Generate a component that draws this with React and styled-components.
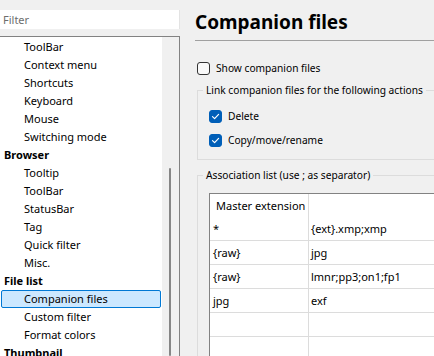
import React from "react";
import styled, { createGlobalStyle } from "styled-components";

const Global = createGlobalStyle`
  html, body { margin: 0; padding: 0; background: #f0f0f0; }
  body { font-family: "Noto Sans", "Open Sans", sans-serif; font-size: 10.2px; color: #000; }
  #root { width: 434px; height: 356px; overflow: hidden; }
`;

const Window = styled.div`
  display: flex;
  width: 434px;
  height: 356px;
  overflow: hidden;
  background: #f0f0f0;
`;

const Sidebar = styled.div`
  width: 180px;
  flex: none;
  display: flex;
  flex-direction: column;
  padding-top: 10px;
  box-sizing: border-box;
  font-size: 11px;
`;

const FilterBox = styled.div`
  height: 19px;
  background: #fff;
  border-right: 1px solid #e3e3e3;
  display: flex;
  align-items: center;
  padding-left: 3px;
  color: #6d6d6d;
`;

const TreeFrame = styled.div`
  margin-top: 7px;
  flex: 1;
  display: flex;
  border-top: 1px solid #828282;
  border-right: 1px solid #828282;
  min-height: 0;
`;

const TreeList = styled.div`
  width: 162px;
  background: #fff;
  padding-top: 1px;
  display: flex;
  flex-direction: column;
`;

const TreeItem = styled.div`
  height: 18px;
  line-height: 16px;
  box-sizing: border-box;
  padding-left: ${(p) => (p.$category ? 2 : 22)}px;
  font-weight: ${(p) => (p.$category ? 700 : 400)};
  margin-left: 1px;
  width: 160px;
  border: 1px solid ${(p) => (p.$selected ? "#0078d4" : "transparent")};
  background: ${(p) => (p.$selected ? "#cce8ff" : "transparent")};
  border-radius: 2px;
  white-space: nowrap;
`;

const ScrollTrack = styled.div`
  width: 17px;
  background: #f0f0f0;
  display: flex;
  flex-direction: column;
  padding: 131px 0 0 7px;
  box-sizing: border-box;
`;

const ScrollThumb = styled.div`
  width: 2px;
  flex: 1;
  background: #868686;
  border-radius: 1px;
`;

const Content = styled.div`
  flex: 1;
  min-width: 0;
  overflow: hidden;
  padding-left: 15px;
  display: flex;
  flex-direction: column;
`;

const Title = styled.h1`
  margin: 0;
  height: 41px;
  flex: none;
  box-sizing: border-box;
  border-bottom: 1px solid #a0a0a0;
  font-size: 19px;
  font-weight: 700;
  line-height: 28px;
  padding-top: 8px;
  white-space: nowrap;
`;

const CheckRow = styled.label`
  display: flex;
  align-items: center;
  gap: 6px;
  flex: none;
  height: ${(p) => p.$h || 24}px;
  line-height: 14px;
  white-space: nowrap;
`;

const TopCheck = styled(CheckRow)`
  margin: 20px 0 8px 2px;
`;

const Box = styled.span`
  width: 13px;
  height: 13px;
  box-sizing: border-box;
  border-radius: 3px;
  flex: none;
  display: flex;
  align-items: center;
  justify-content: center;
  border: 1px solid ${(p) => (p.$checked ? "#005fb8" : "#333")};
  background: ${(p) => (p.$checked ? "#005fb8" : "#f9f9f9")};
`;

const Group = styled.fieldset`
  margin: ${(p) => p.$top || 0}px 0 0 2px;
  padding: 0;
  width: 280px;
  border: 1px solid #dcdcdc;
  box-sizing: border-box;
  min-width: 0;
  flex: none;
`;

const GroupBody = styled.div`
  padding: ${(p) => p.$padTop}px 0 ${(p) => p.$padBottom}px 11px;
`;

const Legend = styled.legend`
  margin-left: 5px;
  padding: 0 3px;
  line-height: 14px;
  height: 14px;
  white-space: nowrap;
`;

const Table = styled.div`
  background: #fff;
  border: 1px solid #828282;
  border-right: none;
  width: 300px;
  height: 200px;
  display: flex;
  flex-direction: column;
  font-size: 11px;
`;

const Row = styled.div`
  display: grid;
  grid-template-columns: 99px 1fr;
  height: ${(p) => (p.$header ? 23 : 24)}px;
  box-sizing: border-box;
  border-bottom: ${(p) => (p.$header ? "none" : "1px solid #dcdcdc")};
`;

const Cell = styled.div`
  display: flex;
  align-items: center;
  white-space: nowrap;
  padding-left: ${(p) => p.$pad || 0}px;
  border-right: ${(p) => (p.$first ? "1px solid #dcdcdc" : "none")};
`;

const Filler = styled.div`
  flex: 1;
  display: grid;
  grid-template-columns: 99px 1fr;
`;

const Check = () => (
  <svg width="9" height="9" viewBox="0 0 9 9">
    <path d="M1.5 4.6 L3.6 6.6 L7.6 2.4" fill="none" stroke="#fff" strokeWidth="1.2" strokeLinecap="round" strokeLinejoin="round" />
  </svg>
);

const tree = [
  ["ToolBar"], ["Context menu"], ["Shortcuts"], ["Keyboard"], ["Mouse"], ["Switching mode"],
  ["Browser", "cat"], ["Tooltip"], ["ToolBar"], ["StatusBar"], ["Tag"], ["Quick filter"], ["Misc."],
  ["File list", "cat"], ["Companion files", "sel"], ["Custom filter"], ["Format colors"], ["Thumbnail", "cat"],
];

const rows = [
  ["*", "{ext}.xmp;xmp"],
  ["{raw}", "jpg"],
  ["{raw}", "lmnr;pp3;on1;fp1"],
  ["jpg", "exf"],
  ["", ""],
];

export default function App() {
  return (
    <Window>
      <Global />
      <Sidebar>
        <FilterBox>Filter</FilterBox>
        <TreeFrame>
          <TreeList>
            {tree.map(([t, k], i) => (
              <TreeItem key={i} $category={k === "cat"} $selected={k === "sel"}>{t}</TreeItem>
            ))}
          </TreeList>
          <ScrollTrack><ScrollThumb /></ScrollTrack>
        </TreeFrame>
      </Sidebar>
      <Content>
        <Title>Companion files</Title>
        <TopCheck $h={14}>
          <Box />
          Show companion files
        </TopCheck>
        <Group>
          <Legend>Link companion files for the following actions</Legend>
          <GroupBody $padTop={7} $padBottom={7}>
            <CheckRow><Box $checked><Check /></Box>Delete</CheckRow>
            <CheckRow><Box $checked><Check /></Box>Copy/move/rename</CheckRow>
          </GroupBody>
        </Group>
        <Group $top={8} style={{ height: 300 }}>
          <Legend>Association list (use ; as separator)</Legend>
          <GroupBody $padTop={11} $padBottom={0}>
            <Table>
              <Row $header>
                <Cell $first $pad={6}>Master extension</Cell>
                <Cell />
              </Row>
              {rows.map(([a, b], i) => (
                <Row key={i}>
                  <Cell $first $pad={3}>{a}</Cell>
                  <Cell $pad={2}>{b}</Cell>
                </Row>
              ))}
              <Filler><Cell $first /><Cell /></Filler>
            </Table>
          </GroupBody>
        </Group>
      </Content>
    </Window>
  );
}
